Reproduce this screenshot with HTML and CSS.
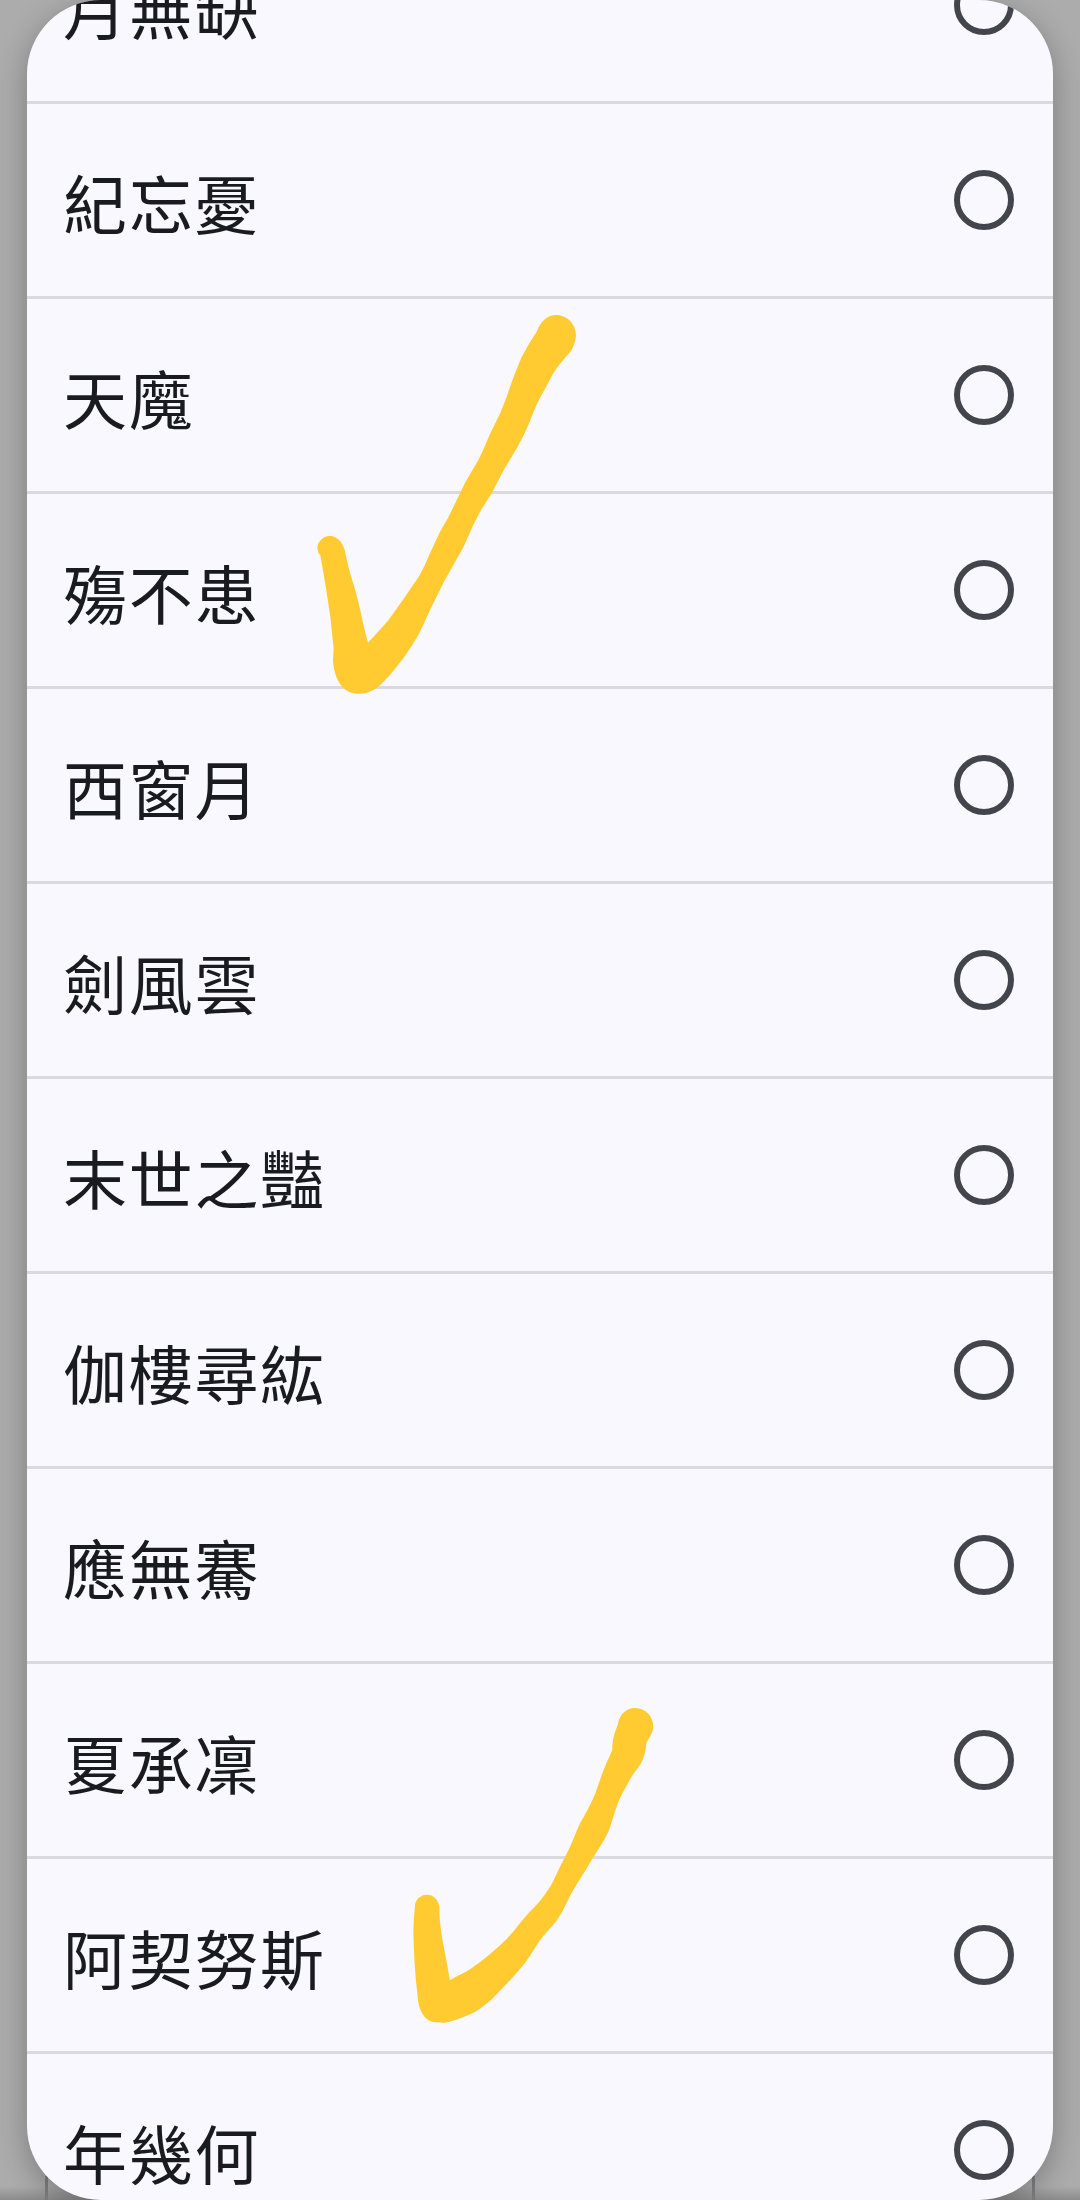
FILE: index.html
```html
<!DOCTYPE html>
<html lang="zh-Hant">
<head>
<meta charset="utf-8">
<title>選項</title>
<link rel="stylesheet" href="styles.css">
</head>
<body>
<div class="screen">
  <ul class="dialog">
    <li class="option"><span class="name">月無缺</span><span class="radio"></span></li>
    <li class="option"><span class="name">紀忘憂</span><span class="radio"></span></li>
    <li class="option"><span class="name">天魔</span><span class="radio"></span></li>
    <li class="option"><span class="name">殤不患</span><span class="radio"></span></li>
    <li class="option"><span class="name">西窗月</span><span class="radio"></span></li>
    <li class="option"><span class="name">劍風雲</span><span class="radio"></span></li>
    <li class="option"><span class="name">末世之豔</span><span class="radio"></span></li>
    <li class="option"><span class="name">伽樓尋紘</span><span class="radio"></span></li>
    <li class="option"><span class="name">應無騫</span><span class="radio"></span></li>
    <li class="option"><span class="name">夏承凜</span><span class="radio"></span></li>
    <li class="option"><span class="name">阿契努斯</span><span class="radio"></span></li>
    <li class="option"><span class="name">年幾何</span><span class="radio"></span></li>
  </ul>
  <svg class="tick tick-first" viewBox="0 0 960 1260" width="320" height="420" aria-hidden="true">
    <path d="M740 125C752 92 775 75 798 75C832 75 858 103 858 137C856 157 848 177 838 189Q805 225 790 250L765 297Q750 322 737 350L715 405Q700 440 682 472L640 542L605 610L575 657Q562 680 550 705L520 772L462 875L420 960Q405 995 385 1035Q365 1070 340 1105L300 1155L268 1188C250 1203 230 1211 208 1211C185 1211 168 1203 157 1190C136 1168 129 1130 129 1107L131 1076L121 980L108 895L97 830L91 796C80 785 80 765 88 755C97 742 110 737 124 738C148 742 165 768 167 795L177 838L195 898L208 948L221 1008L234 1058L280 1008Q296 992 310 970L340 928L388 857Q405 828 420 790L450 725L475 682L510 610L525 578L565 510L578 483L600 432L632 367L650 320L665 277L680 238Q694 198 715 165Z"/>
  </svg>
  <svg class="tick tick-second" viewBox="0 0 900 1050" width="300" height="350" aria-hidden="true">
    <path d="M683 105C688 72 710 54 735 54C767 54 791 80 790 112C788 130 776 145 769 161C768 184 760 208 750 225C735 245 722 262 710 287C698 307 687 327 681 347C671 373 664 405 653 430C640 457 620 485 606 508C586 543 561 581 541 616C530 639 518 667 501 690C486 712 465 730 449 752C433 775 420 800 398 828C368 863 335 898 303 930C282 948 262 963 242 972C216 984 190 994 165 998C145 997 128 997 118 992C98 982 86 952 84 930C75 855 71 785 70 720C71 690 74 663 75 643C80 624 95 614 111 614C129 614 146 628 148 652C148 710 158 750 165 790C171 820 176 850 180 871C200 858 220 851 240 838C282 810 318 778 350 747C378 717 398 687 422 662C449 638 466 612 482 588C496 562 508 532 523 505C541 474 554 435 570 400C584 375 600 348 611 322C624 293 632 258 645 230C652 212 661 195 667 179C666 153 674 127 683 105Z"/>
  </svg>
</div>
</body>
</html>
```
FILE: styles.css
```css
* {
  box-sizing: border-box;
}

body {
  margin: 0;
  background: #acacac;
  font-family: "Noto Sans CJK TC", sans-serif;
}

.screen {
  position: relative;
  display: flex;
  height: 2200px;
  padding: 0 27px;
  overflow: hidden;
  background:
    linear-gradient(#808080, #808080) 45px 100% / 3px 24px no-repeat,
    linear-gradient(#808080, #808080) 1032px 100% / 3px 24px no-repeat,
    linear-gradient(to top, #8b8b8b, #acacac00 14px),
    #acacac;
}

.dialog {
  display: flex;
  flex: 1;
  flex-direction: column;
  margin: 0;
  padding: 0;
  overflow: hidden;
  list-style: none;
  color: #1a1b20;
  background: #f9f8ff;
  border-radius: 74px;
  box-shadow: 0 8px 30px rgba(0, 0, 0, 0.28);
}

.option {
  display: flex;
  flex: 0 0 195px;
  align-items: center;
  justify-content: space-between;
  padding: 0 39px 0 36px;
  border-bottom: 3px solid #dad9e0;
}

/* The list is scrolled partway through its first row */
.option:first-child {
  margin-top: -91px;
}

.name {
  padding-top: 1px;
  font-size: 64px;
  line-height: 96px;
  letter-spacing: 1.7px;
}

.radio {
  width: 60px;
  height: 60px;
  border: 6px solid #43454d;
  border-radius: 50%;
}

/* Hand-drawn marks laid over the list */
.tick {
  position: absolute;
  fill: #ffcb31;
}

.tick-first {
  top: 290px;
  left: 290px;
}

.tick-second {
  top: 1690px;
  left: 390px;
}
```
